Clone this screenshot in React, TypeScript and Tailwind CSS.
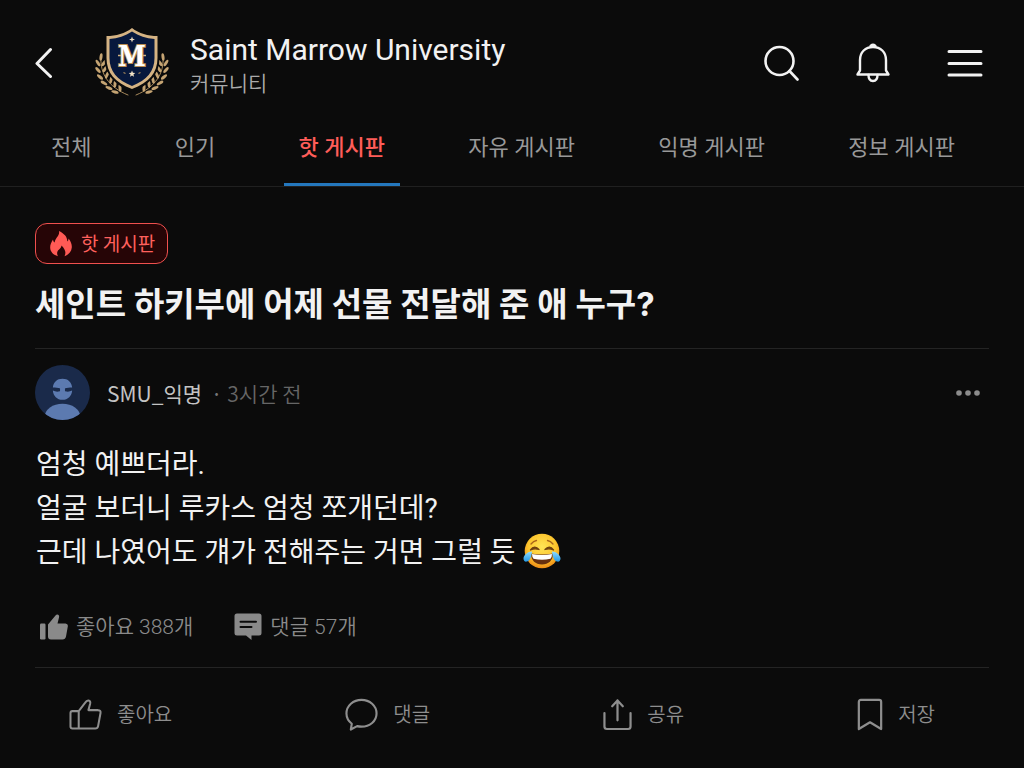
import React from "react";

const tabs = ["전체", "인기", "핫 게시판", "자유 게시판", "익명 게시판", "정보 게시판"];

const leaves: [number, number, number][] = [
  [7, 30, 8],
  [4, 36, -32],
  [10, 36, 38],
  [4, 43, -40],
  [11, 42, 30],
  [6, 50, -50],
  [13, 48, 22],
  [10, 56, -60],
  [17, 53, 12],
  [15, 61, -68],
  [21, 57, 4],
  [21, 65, -76],
  [26, 61, -6],
];

function Laurel() {
  return (
    <g>
      <path d="M7 31C6 46 14 60 34 68" fill="none" stroke="#a88a5c" strokeWidth="1" strokeLinecap="round" />
      {leaves.map(([x, y, r], i) => (
        <ellipse key={i} cx={x} cy={y} rx="1.5" ry="3.700" fill="#c5a473" transform={`rotate(${r} ${x} ${y})`} />
      ))}
    </g>
  );
}

function Crest() {
  return (
    <svg viewBox="0 0 76 72" className="h-[72px] w-[76px] shrink-0" role="img" aria-label="Saint Marrow University">
      <Laurel />
      <g transform="translate(76 0) scale(-1 1)">
        <Laurel />
      </g>
      <path
        d="M38 0.5C31 6 22 9 11.500 9V31C11.500 47 21 57 38 64C55 57 64.500 47 64.500 31V9C54 9 45 6 38 0.500Z"
        fill="#0b0b0b"
        stroke="#0b0b0b"
        strokeWidth="2"
      />
      <path
        d="M38 1C31 6.500 22 9 12.500 9V31C12.500 46 21 55.500 38 62C55 55.500 63.500 46 63.500 31V9C54 9 45 6.500 38 1Z"
        fill="#d5b383"
      />
      <path
        d="M38 4.500C31 9 24 11.500 15.500 12V31C15.500 44 23 53 38 59C53 53 60.500 44 60.500 31V12C52 11.500 45 9 38 4.500Z"
        fill="#07183d"
      />
      <path d="M38 9.500l.8 2.200 2.200.8-2.200.8-.8 2.200-.8-2.200-2.200-.8 2.200-.8Z" fill="#f0dfc2" />
      <path d="M24 28.500h4M48 28.500h4" stroke="#d5b383" strokeWidth="1.500" />
      <text
        x="38"
        y="38.500"
        textAnchor="middle"
        fontFamily="'DejaVu Serif Condensed', 'DejaVu Serif', serif"
        fontWeight="700"
        fontSize="28"
        fill="#ffffff"
        stroke="#b98d52"
        strokeWidth="2"
        paintOrder="stroke"
      >
        M
      </text>
      <path d="M38 43.500l.9 2.300 2.400.1-1.900 1.500.7 2.400-2.100-1.400-2.100 1.400.7-2.400-1.900-1.500 2.400-.1Z" fill="#f3e3c7" />
      <path d="M29.500 45.500l2 1M46.500 45.500l-2 1" stroke="#a88a5c" strokeWidth="1.200" />
    </svg>
  );
}

const line = {
  fill: "none",
  stroke: "currentColor",
  strokeLinecap: "round" as const,
  strokeLinejoin: "round" as const,
  "aria-hidden": true,
};

function BackIcon() {
  return (
    <svg viewBox="0 0 18 32" className="h-8 w-[18px]" strokeWidth="3" {...line}>
      <path d="M15.500 2.500L2 16.500L15.500 29.500" />
    </svg>
  );
}

function SearchIcon() {
  return (
    <svg viewBox="0 0 36 36" className="size-9" strokeWidth="2.600" {...line}>
      <circle cx="16.500" cy="16" r="14" />
      <path d="M26.500 26L34.500 34.500" />
    </svg>
  );
}

function BellIcon() {
  return (
    <svg viewBox="0 0 36 40" className="h-10 w-9" strokeWidth="2.400" {...line}>
      <path d="M2.500 31.500L5 27.500V17C5 9 10.500 4 18 4S31 9 31 17V27.500L33.500 31.500Z" />
      <path d="M16 2.800Q18 1.200 20 2.800" strokeWidth="3" />
      <path d="M13.500 32C13.500 35.500 15 38 18 38S22.500 35.500 22.500 32" />
    </svg>
  );
}

function MenuIcon() {
  return (
    <svg viewBox="0 0 36 30" className="h-[30px] w-9" strokeWidth="3" {...line}>
      <path d="M2 3.500H34M2 15.500H34M2 27H34" />
    </svg>
  );
}

function FlameIcon() {
  return (
    <svg viewBox="0 0 22 26" className="h-[26px] w-[22px] shrink-0" fill="#ff5a55" aria-hidden="true">
      <path d="M9 0C15 3 17.500 6.500 17.200 10.500C18 10 18.500 9 18.500 7.500C21 10.500 22 13.500 21.800 16.500C21.500 20.500 19 23.500 14.500 25.200C16.500 21.500 15 18 11.500 14.500C11.300 17.500 8 18.500 7.300 21C6.900 22.500 7.200 24 8 25.200C3.500 24 .5 21 .2 17C0 14 1.200 11.500 3 8.500C3.200 10 3.700 11 4.700 11.500C5 7 10 5 9 0Z" />
    </svg>
  );
}

function Avatar() {
  return (
    <svg viewBox="0 0 56 56" className="size-[55px] shrink-0" aria-hidden="true">
      <defs>
        <clipPath id="avatar">
          <circle cx="28" cy="28" r="28" />
        </clipPath>
      </defs>
      <circle cx="28" cy="28" r="28" fill="#1a2a4a" />
      <g clipPath="url(#avatar)" fill="#5c7ab0">
        <ellipse cx="28" cy="52" rx="18" ry="12.500" />
        <path d="M18.200 23C18.500 17.500 22.500 14 28 14S37.500 17.500 37.800 23Q33 22.500 28 24.500Q23 22.500 18.200 23Z" />
        <path d="M18.200 26C18.500 31.500 22.500 35.500 28 35.500S37.500 31.500 37.800 26Q33 28.500 28 25.500Q23 28.500 18.200 26Z" />
        <rect x="25.500" y="23" width="5" height="4" />
      </g>
    </svg>
  );
}

function JoyEmoji() {
  return (
    <svg viewBox="0 0 38 36" className="inline-block h-9 w-[38px] align-[-7px]" role="img" aria-label="기쁨의 눈물">
      <defs>
        <radialGradient id="face" cx="50%" cy="38%" r="62%">
          <stop offset="0" stopColor="#ffe456" />
          <stop offset=".65" stopColor="#fdc52d" />
          <stop offset="1" stopColor="#ed8b16" />
        </radialGradient>
        <linearGradient id="tear" x1="0" y1="0" x2="0" y2="1">
          <stop offset="0" stopColor="#8fdcff" />
          <stop offset="1" stopColor="#2399e6" />
        </linearGradient>
      </defs>
      <circle cx="19" cy="18" r="17.300" fill="url(#face)" />
      <path d="M8 11Q10.500 8 13.500 7.500M30 11Q27.500 8 24.500 7.500" fill="none" stroke="#a9641a" strokeWidth="1.300" strokeLinecap="round" />
      <path
        d="M7.500 17Q11.500 11.500 16 16.500Q11.500 15 7.500 17ZM30.500 17Q26.500 11.500 22 16.500Q26.500 15 30.500 17Z"
        fill="#70400f"
        stroke="#70400f"
        strokeWidth="1.300"
        strokeLinejoin="round"
      />
      <path d="M8 20.500Q19 22.500 30 20.500C30 27.500 25.500 31.500 19 31.500S8 27.500 8 20.500Z" fill="#67300f" />
      <path d="M9 21Q19 23 29 21Q29 24.500 27.500 25.800Q19 27.500 10.500 25.800Q9 24.500 9 21Z" fill="#fff" />
      <path d="M9 18.500C5 18.500 .5 22 .5 25.500C.5 28 2 29 4 28.500C7.500 27.500 8.500 23 9 18.500ZM29 18.500C33 18.500 37.500 22 37.500 25.500C37.500 28 36 29 34 28.500C30.500 27.500 29.500 23 29 18.500Z" fill="url(#tear)" />
    </svg>
  );
}

function ThumbSolid() {
  return (
    <svg viewBox="0 0 28 26" className="h-[26px] w-7 shrink-0" fill="currentColor" aria-hidden="true">
      <rect x="0" y="9.500" width="5.500" height="16" rx="1.200" />
      <path d="M8 10.500L15.500 1.500Q16.800 0 18.200 .8Q19.500 1.600 19 3.500L17.500 9.500H25.500Q28.300 9.700 27.800 12.500L26 22.500Q25.400 25.500 22.500 25.500H11Q8 25.500 8 22.500Z" />
    </svg>
  );
}

function CommentSolid() {
  return (
    <svg viewBox="0 0 28 28" className="size-7 shrink-0" aria-hidden="true">
      <path d="M3 .5H25Q27.500 .5 27.500 3V20Q27.500 22.500 25 22.500H17.500V27L12 22.500H3Q.5 22.500 .5 20V3Q.5 .5 3 .5Z" fill="currentColor" />
      <path d="M6.500 8.800H22M6.500 14H17.500" stroke="#0b0b0b" strokeWidth="2" strokeLinecap="round" />
    </svg>
  );
}

function ThumbOutline() {
  return (
    <svg viewBox="0 0 34 32" className="h-[31px] w-[33px]" strokeWidth="2.100" {...line}>
      <path d="M10 12.500V30.500H3.500Q1.500 30.500 1.500 28.500V14.500Q1.500 12.500 3.500 12.500H10L16.500 4Q18.200 1.300 20 1.500Q22.500 2 21.800 5L20 11.500H30Q33 11.700 32.500 14.500L30 28Q29.500 30.500 27 30.500H10" />
    </svg>
  );
}

function CommentOutline() {
  return (
    <svg viewBox="0 0 34 34" className="size-[33px]" strokeWidth="2.200" {...line}>
      <path d="M6 32.500L7 26.500C3.500 23.800 1.500 20 1.500 16C1.500 8 8.500 2 17 2S32.500 8 32.500 16S25.500 29.500 17 29.500Q14.500 29.500 12.500 29Z" />
    </svg>
  );
}

function ShareIcon() {
  return (
    <svg viewBox="0 0 30 34" className="h-[33px] w-[29px]" strokeWidth="2.300" {...line}>
      <path d="M15 23V2.500M9.500 8.500L15 2.500L20.500 8.500M1.500 15.500V29.500Q1.500 32 4 32H26Q28.500 32 28.500 29.500V15.500" />
    </svg>
  );
}

function BookmarkIcon() {
  return (
    <svg viewBox="0 0 26 34" className="h-[33px] w-[26px]" strokeWidth="2.300" {...line}>
      <path d="M1.500 32V4Q1.500 2 3.500 2H22.500Q24.500 2 24.500 4V32L13 25Z" />
    </svg>
  );
}

const actions = [
  { label: "좋아요", icon: <ThumbOutline /> },
  { label: "댓글", icon: <CommentOutline /> },
  { label: "공유", icon: <ShareIcon /> },
  { label: "저장", icon: <BookmarkIcon /> },
];

export default function App() {
  return (
    <div className="min-h-screen bg-[#0b0b0b] font-['Roboto','Noto_Sans_CJK_KR',sans-serif] text-[#f2f2f2]">
      <header className="flex items-center pt-[26px] pr-[41px] pl-[35px]">
        <button type="button" aria-label="뒤로" className="mr-[41px]">
          <BackIcon />
        </button>
        <Crest />
        <div className="ml-5 grow pt-1.5">
          <h1 className="text-[30px] leading-9">Saint Marrow University</h1>
          <p className="text-[21px] leading-8 font-[350] text-[#aaaaaa]">커뮤니티</p>
        </div>
        <nav aria-label="메뉴" className="flex items-center gap-14">
          <button type="button" aria-label="검색"><SearchIcon /></button>
          <button type="button" aria-label="알림"><BellIcon /></button>
          <button type="button" aria-label="메뉴 열기"><MenuIcon /></button>
        </nav>
      </header>

      <nav aria-label="게시판" className="mt-[15px] flex justify-between border-b border-[#202020] pr-[54px] pl-9">
        {tabs.map((tab) => (
          <a
            key={tab}
            href="#"
            aria-current={tab === "핫 게시판" ? "page" : undefined}
            className={
              tab === "핫 게시판"
                ? "border-b-3 border-[#2477bd] px-[15px] pt-[15px] pb-[17px] text-[22px] leading-9 font-medium text-[#ff5d59]"
                : "border-b-3 border-transparent px-[15px] pt-[15px] pb-[17px] text-[22px] leading-9 text-[#999999]"
            }
          >
            {tab}
          </a>
        ))}
      </nav>

      <main className="px-[35px] pt-9">
        <article>
          <span className="inline-flex h-[41px] items-center gap-[9px] rounded-xl border border-[#f0504e] bg-[#260506] px-3 pl-3.5 font-['Noto_Sans_CJK_KR',sans-serif] text-[19px] text-[#ff605c]">
            <FlameIcon />
            핫 게시판
          </span>
          <h2 className="mt-4 border-b border-[#242424] pb-5 font-['Inter','Noto_Sans_CJK_KR',sans-serif] text-[33px] leading-12 font-bold">
            세인트 하키부에 어제 선물 전달해 준 애 누구?
          </h2>

          <div className="mt-4 flex items-center">
            <Avatar />
            <p className="ml-[17px] grow font-['Noto_Sans_CJK_KR',sans-serif] text-[21px] leading-8 text-[#c4c4c4]">
              SMU_익명 <span className="ml-1 text-[#777777]">·</span>{" "}
              <span className="font-[350] text-[#666666]">3시간 전</span>
            </p>
            <button type="button" aria-label="더보기" className="mr-2 text-[#8c8c8c]">
              <svg viewBox="0 0 26 8" className="h-2 w-[26px]" fill="currentColor" aria-hidden="true">
                <circle cx="4" cy="4" r="2.800" />
                <circle cx="13" cy="4" r="2.800" />
                <circle cx="22" cy="4" r="2.800" />
              </svg>
            </button>
          </div>

          <div className="mt-[23px] pl-px text-[28px] leading-11">
            <p>엄청 예쁘더라.</p>
            <p>얼굴 보더니 루카스 엄청 쪼개던데?</p>
            <p>
              근데 나였어도 걔가 전해주는 거면 그럴 듯 <JoyEmoji />
            </p>
          </div>

          <div className="mt-9 flex gap-[41px] border-b border-[#242424] pb-6 pl-[5px] text-[21px] leading-8 font-[350] text-[#8a8a8a]">
            <span className="flex items-center gap-2">
              <ThumbSolid />
              좋아요 388개
            </span>
            <span className="flex items-center gap-2">
              <CommentSolid />
              댓글 57개
            </span>
          </div>
        </article>

        <div className="flex justify-between pt-7 pr-[54px] pb-8 pl-[34px] font-['Noto_Sans_CJK_KR',sans-serif] text-[20px] leading-9 text-[#8e8e8e]">
          {actions.map(({ label, icon }) => (
            <button key={label} type="button" className="flex items-center gap-[15px] font-[350]">
              {icon}
              {label}
            </button>
          ))}
        </div>
      </main>
    </div>
  );
}
